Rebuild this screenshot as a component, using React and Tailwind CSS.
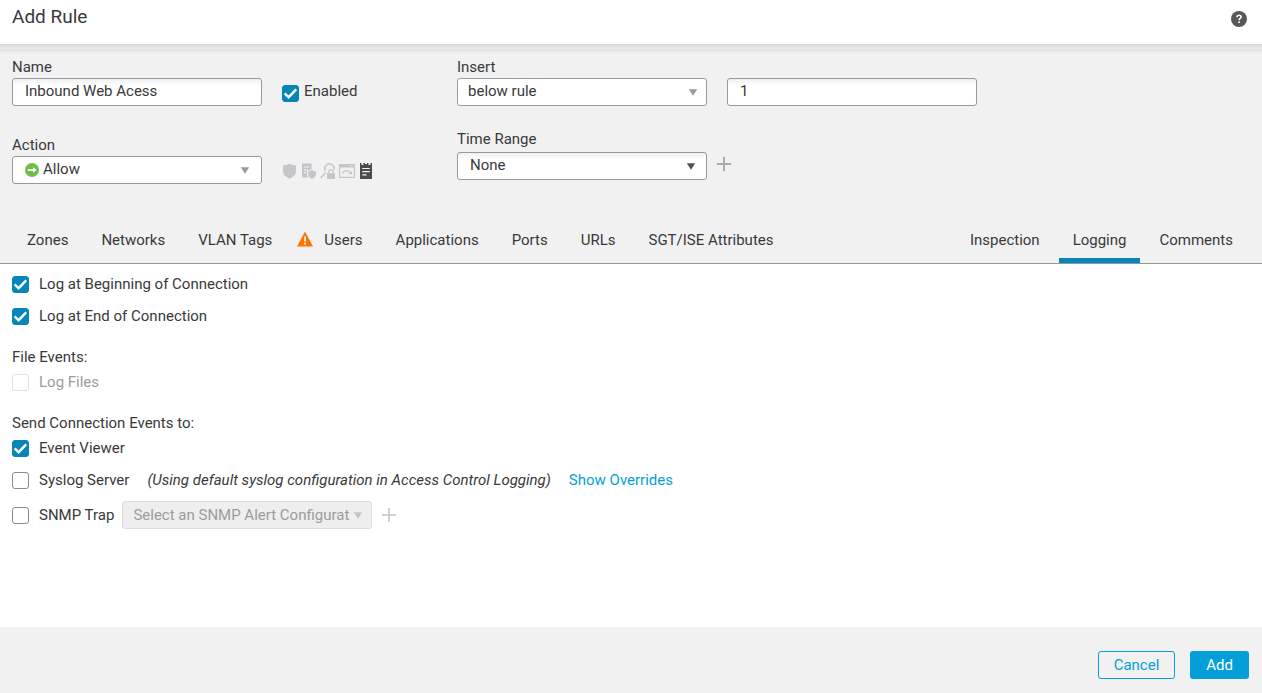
import React, { useState } from 'react';

const leftTabs = ['Zones', 'Networks', 'VLAN Tags', 'Users', 'Applications', 'Ports', 'URLs', 'SGT/ISE Attributes'];
const rightTabs = ['Inspection', 'Logging', 'Comments'];

const Checkbox = ({ id, checked, onChange, disabled }) => (
  <span className="inline-grid shrink-0">
    <input
      id={id}
      type="checkbox"
      checked={checked}
      onChange={onChange}
      disabled={disabled}
      className="col-start-1 row-start-1 size-[17px] appearance-none rounded-[3px] border border-[#8c8c8f] bg-white checked:border-[#0586b7] checked:bg-[#0586b7] disabled:border-[#e0e0e1]"
    />
    {checked && (
      <svg viewBox="0 0 17 17" className="pointer-events-none col-start-1 row-start-1 size-[17px]" fill="none">
        <path d="M2.6 8.4 L6.6 12.2 L14.2 4.4" stroke="#fff" strokeWidth="2.4" />
      </svg>
    )}
  </span>
);

const CheckRow = ({ id, label, checked, onChange, disabled }) => (
  <div className="flex items-center gap-[10px]">
    <Checkbox id={id} checked={checked} onChange={onChange} disabled={disabled} />
    <label htmlFor={id} className={disabled ? 'text-[#9c9c9e]' : ''}>{label}</label>
  </div>
);

const Select = ({ id, label, options, className = '', arrow = 'text-[#9a9a9d]', arrowPos = 'mr-2', icon, disabled }) => (
  <div className="grid w-[250px] shrink-0 items-center">
    <select
      id={id}
      aria-label={label}
      disabled={disabled}
      className={`col-start-1 row-start-1 h-7 w-full appearance-none rounded-[3px] border ${className}`}
    >
      {options.map((option) => (
        <option key={option}>{option}</option>
      ))}
    </select>
    {icon}
    <svg
      viewBox="0 0 10 7"
      className={`pointer-events-none col-start-1 row-start-1 h-[7px] w-[10px] justify-self-end ${arrow} ${arrowPos}`}
      fill="currentColor"
    >
      <path d="M0.8 0.3 H9.2 L5 6.7 Z" />
    </svg>
  </div>
);

const Plus = ({ label, className }) => (
  <button type="button" aria-label={label} className={className}>
    <svg viewBox="0 0 14 14" className="size-[14px]" fill="none" stroke="currentColor" strokeWidth="2">
      <path d="M7 0 V14 M0 7 H14" />
    </svg>
  </button>
);

const AllowIcon = () => (
  <svg viewBox="0 0 14 14" className="pointer-events-none col-start-1 row-start-1 ml-[13px] size-[14px]">
    <circle cx="7" cy="7" r="7" fill="#6cc04a" />
    <path d="M2.8 6.1 H8 V4.2 L11.7 7 L8 9.8 V7.9 H2.8 Z" fill="#fff" />
  </svg>
);

const WarningIcon = () => (
  <svg viewBox="0 0 16 16" className="size-4">
    <path d="M8 0.5 L16 15.5 H0 Z" fill="#ff7300" />
    <path d="M8 5.4 V10.6 M8 11.8 V13.6" stroke="#fff" strokeWidth="1.8" />
  </svg>
);

// Policy indicators next to the action
const ActionIcons = () => (
  <div className="flex gap-[3px] pt-0.5">
    <svg viewBox="0 0 16 16" className="size-4" fill="#c4c5c9">
      <path d="M7.5 0.5 C5.5 2 3.2 2.4 1 2.4 V8 C1 11.8 4 14.2 7.5 15.5 C11 14.2 14 11.8 14 8 V2.4 C11.8 2.4 9.5 2 7.5 0.5 Z" />
    </svg>
    <svg viewBox="0 0 16 16" className="size-4">
      <path d="M1 0.5 H10.5 V6 C9 7.2 7.5 7.4 6 7.4 V11 C6 12.6 6.6 13.6 7.4 14.5 H1 Z" fill="#c4c5c9" />
      <path d="M3 4 H8.5 M3 6.8 H6.2 M3 9.6 H5" stroke="#f1f1f1" strokeWidth="1.2" />
      <path d="M11 7 C9.8 7.9 8.4 8.2 7.1 8.2 V11 C7.1 13.4 9 14.9 11 15.8 C13.1 14.9 15 13.4 15 11 V8.2 C13.6 8.2 12.2 7.9 11 7 Z" fill="#c4c5c9" />
    </svg>
    <svg viewBox="0 0 16 16" className="size-4" fill="none" stroke="#c4c5c9">
      <path d="M5.2 7.6 A4.7 4.7 0 1 1 13.9 7 M6 9.5 L0.6 15" strokeWidth="1.5" />
      <path d="M8.8 10.4 V9 A2.2 2.2 0 0 1 13.2 9 V10.4" strokeWidth="1.2" />
      <rect x="7" y="10.2" width="8" height="5.8" fill="#c4c5c9" stroke="none" />
    </svg>
    <svg viewBox="0 0 16 16" className="size-4" fill="none" stroke="#c4c5c9">
      <rect x="0.6" y="1.6" width="14.8" height="12.8" strokeWidth="1.2" />
      <path d="M0 3 H16" strokeWidth="3" />
      <path d="M10.5 2.8 H14.5" stroke="#f1f1f1" strokeWidth="1" strokeDasharray="1 0.6" />
      <path d="M3.5 10.6 C5 6.8 9 6.8 11.4 9.6" strokeWidth="1.3" />
      <path d="M13 7.8 V11.2 H9.4 Z" fill="#c4c5c9" stroke="none" />
    </svg>
    <svg viewBox="0 0 16 16" className="size-4">
      <path d="M2 0 H3.5 V2 H5.5 V0 H10.5 V2 H12.5 V0 H14 V16 H2 Z M7 0 V1 H9 V0 Z" fill="#4c4c4e" fillRule="evenodd" />
      <path d="M4.2 5.5 H11.8 M4.2 8.6 H11.8 M4.2 11.8 H8.6" stroke="#f1f1f1" strokeWidth="1.2" />
    </svg>
  </div>
);

const Tab = ({ name, active, onSelect }) => (
  <button
    type="button"
    role="tab"
    aria-selected={active}
    onClick={() => onSelect(name)}
    className={`flex h-[43px] items-center border-b-[5px] px-[14px] pt-0.5 ${active ? 'border-[#0586b7]' : 'border-transparent'}`}
  >
    {name === 'Users' && <span className="-ml-2 mr-[11px] pb-0.5"><WarningIcon /></span>}
    {name}
  </button>
);

const App = () => {
  const [name, setName] = useState('Inbound Web Acess');
  const [position, setPosition] = useState('1');
  const [activeTab, setActiveTab] = useState('Logging');
  const [checks, setChecks] = useState({ enabled: true, begin: true, end: true, viewer: true, syslog: false, snmp: false });

  const toggle = (key) => setChecks({ ...checks, [key]: !checks[key] });

  const inputStyle = 'h-7 w-[250px] shrink-0 rounded-[3px] border border-[#99999c] bg-white bg-linear-to-b from-[#eef1f3] to-white to-25% px-3 pb-0.5';

  return (
    <div className="flex min-h-screen flex-col bg-white font-['Roboto','Liberation_Sans',sans-serif] text-[15px] leading-5 text-[#39393b]">
      <header className="flex h-11 items-start justify-between pt-[7px] pr-[15px] pl-3">
        <h1 className="text-[19px] leading-5">Add Rule</h1>
        <button type="button" aria-label="Help" className="mt-1">
          <svg viewBox="0 0 16 16" className="size-4" fill="none">
            <circle cx="8" cy="8" r="8" fill="#58585b" />
            <path d="M6 6.2 C6 3.6 10.1 3.6 10.1 6 C10.1 7.5 8.1 7.4 8.1 9.2" stroke="#fff" strokeWidth="1.6" />
            <rect x="7.3" y="10.4" width="1.6" height="1.6" fill="#fff" />
          </svg>
        </button>
      </header>

      <div className="border-b border-[#97979a] bg-[#f1f1f1]">
        <div className="h-[5px] bg-linear-to-b from-[#d8d8d8] to-[#ececec]" />
        <div className="h-[5px] bg-linear-to-b from-[#e2e2e2] to-[#f1f1f1]" />

        <div className="flex h-[166px] px-3 pt-[3px]">
          <div className="flex w-[445px] shrink-0 flex-col gap-[29px]">
            <div>
              <label htmlFor="rule-name" className="block h-[21px]">Name</label>
              <div className="flex gap-5">
                <input
                  id="rule-name"
                  type="text"
                  value={name}
                  onChange={(e) => setName(e.target.value)}
                  className={inputStyle}
                />
                <div className="flex items-center gap-[5px]">
                  <span className="flex pt-0.5">
                    <Checkbox id="enabled" checked={checks.enabled} onChange={() => toggle('enabled')} />
                  </span>
                  <label htmlFor="enabled" className="pb-0.5">Enabled</label>
                </div>
              </div>
            </div>
            <div>
              <label htmlFor="action" className="block h-[21px]">Action</label>
              <div className="flex items-center gap-5">
                <Select
                  id="action"
                  options={['Allow', 'Trust', 'Block']}
                  className="border-[#99999c] bg-white pr-6 pb-0.5 pl-[30px]"
                  arrowPos="mr-3"
                  icon={<AllowIcon />}
                />
                <ActionIcons />
              </div>
            </div>
          </div>

          <div className="flex flex-col gap-[23px]">
            <div>
              <label htmlFor="insert" className="block h-[21px]">Insert</label>
              <div className="flex gap-5">
                <Select
                  id="insert"
                  options={['below rule', 'above rule']}
                  className="border-[#99999c] bg-white pr-6 pb-0.5 pl-[10px]"
                  arrowPos="mr-[9px]"
                />
                <input
                  type="text"
                  aria-label="Rule number"
                  value={position}
                  onChange={(e) => setPosition(e.target.value)}
                  className={inputStyle}
                />
              </div>
            </div>
            <div>
              <label htmlFor="time-range" className="block h-[23px]">Time Range</label>
              <div className="flex items-center gap-[10px]">
                <Select
                  id="time-range"
                  options={['None']}
                  className="border-[#99999c] bg-white bg-linear-to-b from-[#eef1f3] to-white to-25% pr-6 pb-0.5 pl-3"
                  arrow="text-[#505053]"
                  arrowPos="mr-[11px]"
                />
                <Plus label="Add time range" className="pb-1 text-[#acacaf]" />
              </div>
            </div>
          </div>
        </div>

        <div role="tablist" className="flex justify-between pr-[15px] pl-[13px]">
          <div className="flex gap-[5px]">
            {leftTabs.map((tab) => (
              <Tab key={tab} name={tab} active={tab === activeTab} onSelect={setActiveTab} />
            ))}
          </div>
          <div className="flex gap-[5px]">
            {rightTabs.map((tab) => (
              <Tab key={tab} name={tab} active={tab === activeTab} onSelect={setActiveTab} />
            ))}
          </div>
        </div>
      </div>

      <main className="flex-1 px-3 pt-[10px]">
        <div className="flex flex-col gap-3">
          <CheckRow id="log-begin" label="Log at Beginning of Connection" checked={checks.begin} onChange={() => toggle('begin')} />
          <CheckRow id="log-end" label="Log at End of Connection" checked={checks.end} onChange={() => toggle('end')} />
        </div>

        <h2 className="mt-[21px] mb-[5px]">File Events:</h2>
        <CheckRow id="log-files" label="Log Files" checked={false} disabled />

        <h2 className="mt-[21px] mb-[5px]">Send Connection Events to:</h2>
        <div className="flex flex-col gap-3">
          <CheckRow id="event-viewer" label="Event Viewer" checked={checks.viewer} onChange={() => toggle('viewer')} />
          <div className="flex items-center">
            <CheckRow id="syslog" label="Syslog Server" checked={checks.syslog} onChange={() => toggle('syslog')} />
            <em className="ml-[18px]">(Using default syslog configuration in Access Control Logging)</em>
            <a href="#overrides" className="ml-[18px] text-[#049fd9]">Show Overrides</a>
          </div>
        </div>
        <div className="mt-[11px] flex items-center gap-2">
          <CheckRow id="snmp" label="SNMP Trap" checked={checks.snmp} onChange={() => toggle('snmp')} />
          <Select
            id="snmp-alert"
            label="SNMP alert configuration"
            options={['Select an SNMP Alert Configurat']}
            className="border-[#dededf] bg-[#eee] pr-4 pl-[10px] text-[#9c9c9e] opacity-100"
            arrow="text-[#c4c4c6]"
            arrowPos="mr-[9px]"
            disabled
          />
          <Plus label="Add SNMP alert" className="ml-0.5 text-[#cfcfd1]" />
        </div>
      </main>

      <footer className="flex h-[66px] items-start justify-end gap-[15px] bg-[#f1f1f1] pt-6 pr-[13px]">
        <button type="button" className="h-7 w-[77px] rounded-[3px] border border-[#049fd9] text-[#049fd9]">Cancel</button>
        <button type="button" className="h-7 w-[59px] rounded-[3px] bg-[#049fd9] text-white">Add</button>
      </footer>
    </div>
  );
};

export default App;
